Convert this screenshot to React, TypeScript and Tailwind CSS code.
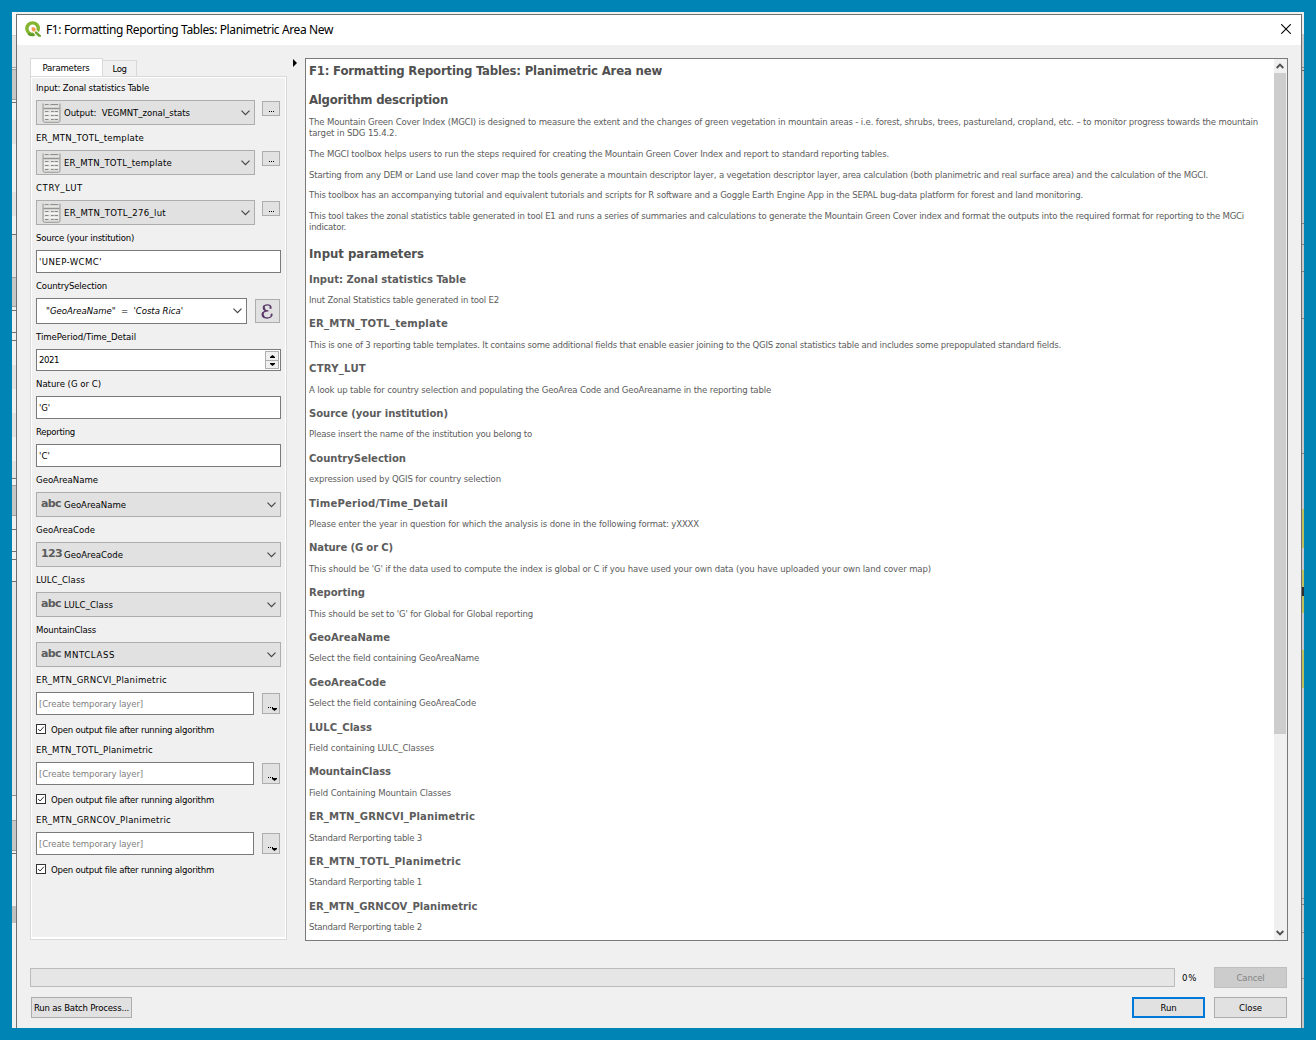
import { useLayoutEffect, useRef, useState } from 'react';
import type { ReactNode } from 'react';

/** Single line of text whose tracking is adjusted so that it spans `w` pixels. */
function Fit({ w, className = '', children }: { w: number; className?: string; children: string }) {
  const ref = useRef<HTMLSpanElement>(null);
  const [spacing, setSpacing] = useState(0);
  useLayoutEffect(() => {
    const el = ref.current;
    if (!el) return;
    const natural = el.getBoundingClientRect().width - spacing * children.length;
    setSpacing((w - natural) / children.length);
  }, [w, children]);
  return (
    <span ref={ref} className={`inline-block whitespace-pre ${className}`} style={{ letterSpacing: spacing }}>
      {children}
    </span>
  );
}

function Chevron({ className = '' }: { className?: string }) {
  return (
    <svg className={`shrink-0 ${className}`} width="9" height="6" viewBox="0 0 9 6" fill="none">
      <path d="M0.5 0.7L4.5 4.7L8.5 0.7" stroke="#444" strokeWidth="1.15" />
    </svg>
  );
}

function TableIcon() {
  return (
    <svg className="shrink-0" width="19" height="20" viewBox="0 0 19 20">
      <path d="M1 1H18V18.5H1Z" fill="#d2d2d0" />
      <path d="M1 0.5V17.6Q1 19.3 2.6 19.3H16.4Q18 19.3 18 17.6V0.5" fill="none" stroke="#9a9a98" strokeWidth="1" />
      <path d="M3 1.5H6.5M8.5 1.5H16" stroke="#8f8f8d" />
      <path d="M2 3.2H17" stroke="#efefed" />
      <path d="M1.5 5.5H17.5" stroke="#949492" />
      <path d="M2 7H17V17.6H2Z" fill="#e6e6e4" />
      <path d="M3 8.5H6.5M9 8.5H11.8M12.6 8.5H16M3 12.5H6.5M9 12.5H11.8M12.6 12.5H16M3 16.5H6.5M9 16.5H11.8M12.6 16.5H16" stroke="#8a8a88" strokeWidth="1.1" />
      <path d="M2 10.5H17M2 14.5H17" stroke="#f6f6f6" />
    </svg>
  );
}

function Field({ label, w, children }: { label: string; w: number; children: ReactNode }) {
  return (
    <div className="mb-[7px]">
      <div className="mb-[6px] flex h-3 items-center">
        <Fit w={w}>{label}</Fit>
      </div>
      {children}
    </div>
  );
}

function LayerField({ label, lw, value, w }: { label: string; lw: number; value: string; w: number }) {
  return (
    <Field label={label} w={lw}>
      <div className="flex">
        <div className="flex h-[25px] w-[219px] items-center border border-[#adadad] bg-[#e1e1e1] pr-[4px] pl-[5px]">
          <TableIcon />
          <Fit w={w} className="ml-[3px]">{value}</Fit>
          <Chevron className="ml-auto" />
        </div>
        <div className="mt-px ml-[7px] flex h-[15px] w-[18px] items-end justify-center gap-px border border-[#adadad] bg-[#e1e1e1] pb-[3px]">
          <Dots />
        </div>
      </div>
    </Field>
  );
}

function Dots() {
  return (
    <>
      <i className="size-px bg-black" />
      <i className="size-px bg-black" />
      <i className="size-px bg-black" />
    </>
  );
}

function TextField({ label, lw, value, w }: { label: string; lw: number; value: string; w: number }) {
  return (
    <Field label={label} w={lw}>
      <div className="flex h-[23px] w-[245px] items-center border border-[#7a7a7a] bg-white pl-[2px]">
        <Fit w={w}>{value}</Fit>
      </div>
    </Field>
  );
}

function ColumnField({ label, lw, kind, value, w }: { label: string; lw: number; kind: string; value: string; w: number }) {
  return (
    <Field label={label} w={lw}>
      <div className="flex h-[25px] w-[245px] items-center border border-[#adadad] bg-[#e1e1e1] pr-[4px] pl-[4px]">
        <span className="flex w-[23px] pb-[2px] text-[11px] font-bold text-[#5c5c5c] font-['DejaVu_Sans']">
          <Fit w={kind === '123' ? 21 : 20}>{kind}</Fit>
        </span>
        <Fit w={w}>{value}</Fit>
        <Chevron className="ml-auto" />
      </div>
    </Field>
  );
}

function OutputField({ label, lw }: { label: string; lw: number }) {
  return (
    <Field label={label} w={lw}>
      <div className="flex">
        <div className="flex h-[23px] w-[218px] items-center border border-[#7a7a7a] bg-white pl-[2px] text-[#808080]">
          <Fit w={104}>[Create temporary layer]</Fit>
        </div>
        <div className="mt-px ml-[8px] flex h-[21px] w-[18px] items-end border border-[#adadad] bg-[#e1e1e1] pb-[2px] pl-[5px]">
          <span className="mb-[3px] flex gap-px"><Dots /></span>
          <svg className="-ml-px" width="5" height="3" viewBox="0 0 5 3"><path d="M0 0H5V1L2.5 3L0 1Z" /></svg>
        </div>
      </div>
      <div className="mt-[7px] flex h-[15px] items-center">
        <svg className="mb-px" width="10" height="10" viewBox="0 0 10 10">
          <rect x="0.5" y="0.5" width="9" height="9" fill="#fff" stroke="#333" />
          <path d="M2.2 5L4.1 7L7.9 2.7" fill="none" stroke="#333" />
        </svg>
        <Fit w={163} className="ml-[5px]">Open output file after running algorithm</Fit>
      </div>
    </Field>
  );
}

function H2({ w, className = '', children }: { w: number; className?: string; children: string }) {
  return (
    <h2 className={`flex h-4 items-center pt-px text-[13px] font-bold text-[#505050] ${className}`}>
      <Fit w={w}>{children}</Fit>
    </h2>
  );
}

function Para({ lines, className = '' }: { lines: [string, number][]; className?: string }) {
  return (
    <div className={className}>
      {lines.map(([t, w]) => (
        <p key={t} className="flex h-[11px] items-center"><Fit w={w}>{t}</Fit></p>
      ))}
    </div>
  );
}

const PARAMS: [string, number, string, number][] = [
  ['Input: Zonal statistics Table', 157, 'Inut Zonal Statistics table generated in tool E2', 190],
  ['ER_MTN_TOTL_template', 139, 'This is one of 3 reporting table templates. It contains some additional fields that enable easier joining to the QGIS zonal statistics table and includes some prepopulated standard fields.', 752],
  ['CTRY_LUT', 57, 'A look up table for country selection and populating the GeoArea Code and GeoAreaname in the reporting table', 462],
  ['Source (your institution)', 139, 'Please insert the name of the institution you belong to', 223],
  ['CountrySelection', 97, 'expression used by QGIS for country selection', 192],
  ['TimePeriod/Time_Detail', 139, 'Please enter the year in question for which the analysis is done in the following format: yXXXX', 390],
  ['Nature (G or C)', 84, "This should be 'G' if the data used to compute the index is global or C if you have used your own data (you have uploaded your own land cover map)", 622],
  ['Reporting', 56, "This should be set to 'G' for Global for Global reporting", 224],
  ['GeoAreaName', 81, 'Select the field containing GeoAreaName', 170],
  ['GeoAreaCode', 77, 'Select the field containing GeoAreaCode', 167],
  ['LULC_Class', 63, 'Field containing LULC_Classes', 125],
  ['MountainClass', 82, 'Field Containing Mountain Classes', 142],
  ['ER_MTN_GRNCVI_Planimetric', 166, 'Standard Rerporting table 3', 113],
  ['ER_MTN_TOTL_Planimetric', 152, 'Standard Rerporting table 1', 113],
  ['ER_MTN_GRNCOV_Planimetric', 168.5, 'Standard Rerporting table 2', 113],
];

/** Slices of the window behind the dialog that show at its left edge. */
function LeftSliver() {
  return (
    <div className="flex w-1 flex-col bg-[#f0f0f0]">
      <i className="h-[23px] bg-[#f7f7f7]" />
      <i className="h-[32px] border-t border-[#d0d0d0] bg-[#e2e2e2]" />
      <i className="h-[3px] border-y border-[#a0a0a0]" />
      <i className="h-[29px] bg-[#c6c6c6]" />
      <i className="h-[4px] border-y border-t-[#a0a0a0] border-b-[#707070]" />
      <i className="h-[17px]" />
      <i className="h-[24px] bg-[#e3e3e3]" />
      <i className="h-[48px]" />
      <i className="h-[24px] bg-[#e3e3e3]" />
      <i className="h-[19px] border-b border-[#707070]" />
      <i className="h-[42px] bg-[#e2e2e2]" />
      <i className="h-[30px] border-y border-[#a0a0a0] bg-[#c6c6c6]" />
      <i className="h-[4px] border-b border-[#707070]" />
      <i className="h-[22px] border-b border-[#707070]" />
      <i className="h-[8px] border-b border-[#707070]" />
      <i className="h-[24px]" />
      <i className="h-[24px] bg-[#e3e3e3]" />
      <i className="h-[24px]" />
      <i className="h-[24px] bg-[#e3e3e3]" />
      <i className="h-[24px]" />
      <i className="h-[18px] border-b border-[#707070] bg-[#e3e3e3]" />
      <i className="h-[6px]" />
      <i className="h-[31px] border-y border-[#a0a0a0] bg-[#c6c6c6]" />
      <i className="h-[14px] border-b border-[#707070]" />
      <i className="h-[22px] border-b border-[#707070]" />
      <i className="h-[8px] border-b border-[#707070]" />
      <i className="h-[22px] border-b border-[#707070]" />
      <i className="h-[214px] border-b border-[#909090] bg-[#e4e4e4]" />
      <i className="h-[24px]" />
      <i className="h-[31px] border-y border-[#a0a0a0] bg-[#c6c6c6]" />
      <i className="h-[3px] border-b border-[#707070]" />
      <i className="h-[52px]" />
      <i className="h-[17px] bg-[#c0c0c0]" />
    </div>
  );
}

/** Slices of the window behind the dialog that show at its right edge. */
function RightSliver() {
  return (
    <div className="flex w-[2px] flex-col bg-[#c9c9c9]">
      <i className="h-[22px] bg-[#eeeeee]" />
      <i className="h-[34px] border-b border-[#808080]" />
      <i className="h-[3px] border-b border-[#606060]" />
      <i className="h-[153px] border-b border-[#808080]" />
      <i className="h-[21px] border-b border-[#808080]" />
      <i className="h-[27px] border-b border-[#808080]" />
      <i className="h-[47px] border-b border-[#808080]" />
      <i className="h-[135px] border-b border-[#808080]" />
      <i className="h-[55px]" />
      <i className="h-[39px] bg-[#bfbf5e]" />
      <i className="h-[22px]" />
      <i className="h-[17px] bg-[#bfbf5e]" />
      <i className="h-[9px] bg-[#303030]" />
      <i className="h-[17px] bg-[#bfbf5e]" />
      <i className="h-[37px]" />
      <i className="h-[38px] bg-[#bfbf5e]" />
      <i className="h-[211px] border-b border-[#909090]" />
      <i className="h-[6px] border-b border-[#808080]" />
      <i className="h-[28px] border-b border-[#909090]" />
      <i className="h-[46px] border-b border-[#909090]" />
    </div>
  );
}

function Parameters() {
  return (
    <section className="flex w-[257px] flex-col pt-[13px]">
      <div className="flex h-[18px] items-end">
        <div className="flex h-[18px] w-[73px] items-center justify-center border border-b-0 border-[#d9d9d9] bg-white pr-px">
          <Fit w={47}>Parameters</Fit>
        </div>
        <div className="flex h-[16px] w-[34px] items-center justify-center border border-b-0 border-l-0 border-[#d9d9d9] bg-[#f0f0f0] pt-px">
          <Fit w={14}>Log</Fit>
        </div>
      </div>
      <div className="h-[864px] border border-[#d9d9d9]">
        <div className="h-full border border-b-2 border-white pt-[4px] pl-[4px]">
          <LayerField label="Input: Zonal statistics Table" lw={113} value="Output:  VEGMNT_zonal_stats" w={126} />
          <LayerField label="ER_MTN_TOTL_template" lw={108} value="ER_MTN_TOTL_template" w={108} />
          <LayerField label="CTRY_LUT" lw={47} value="ER_MTN_TOTL_276_lut" w={102} />
          <TextField label="Source (your institution)" lw={98} value="'UNEP-WCMC'" w={63} />
          <Field label="CountrySelection" w={71}>
            <div className="flex items-center">
              <div className="flex h-[26px] w-[211px] items-center border border-[#7a7a7a] bg-white pr-[4px] pl-[9px]">
                <Fit w={137} className="italic">{'"GeoAreaName"  =  \'Costa Rica\''}</Fit>
                <Chevron className="ml-auto" />
              </div>
              <div className="ml-[8px] flex h-[24px] w-[25px] items-center justify-center border border-[#adadad] bg-[#e1e1e1]">
                <svg className="mr-[2px]" width="12" height="15" viewBox="0 0 12 15" fill="none" stroke="#5b3a6b" strokeLinecap="round">
                  <path d="M9.8 4.2C10.3 1.7 8.4 0.9 6.4 0.9C3.8 0.9 2.3 2.2 2.4 3.9C2.5 5.8 4.2 6.8 7.4 6.9C3.8 6.9 1.2 8.3 1.2 10.6C1.2 12.8 3.2 14 6 14C9 14 11 12.6 10.9 10.2" strokeWidth="1.3" />
                  <path d="M2.9 2.5C2.5 3.5 2.8 4.8 3.7 5.7M1.9 9C1.5 10.3 1.7 11.6 2.7 12.7" strokeWidth="2" />
                  <path d="M9.4 3.2V3.9M10.4 10.7V11.1" strokeWidth="1.8" />
                </svg>
              </div>
            </div>
          </Field>
          <Field label="TimePeriod/Time_Detail" w={100}>
            <div className="flex h-[22px] w-[245px] items-center justify-between border border-[#7a7a7a] bg-white pr-px pl-[2px]">
              <Fit w={20}>2021</Fit>
              <div className="flex w-[14px] flex-col border border-[#adadad] bg-[#adadad]">
                <span className="flex h-[8px] items-center justify-center bg-[#f0f0f0]">
                  <svg width="5" height="3" viewBox="0 0 5 3"><path d="M0 3V2L2.5 0L5 2V3Z" /></svg>
                </span>
                <span className="mt-px flex h-[7px] items-center justify-center bg-[#f0f0f0]">
                  <svg width="5" height="3" viewBox="0 0 5 3"><path d="M0 0H5V1L2.5 3L0 1Z" /></svg>
                </span>
              </div>
            </div>
          </Field>
          <TextField label="Nature (G or C)" lw={65} value="'G'" w={11} />
          <TextField label="Reporting" lw={39} value="'C'" w={11} />
          <ColumnField label="GeoAreaName" lw={62} kind="abc" value="GeoAreaName" w={62} />
          <ColumnField label="GeoAreaCode" lw={59} kind="123" value="GeoAreaCode" w={59} />
          <ColumnField label="LULC_Class" lw={49} kind="abc" value="LULC_Class" w={49} />
          <ColumnField label="MountainClass" lw={60} kind="abc" value="MNTCLASS" w={51} />
          <OutputField label="ER_MTN_GRNCVI_Planimetric" lw={131} />
          <OutputField label="ER_MTN_TOTL_Planimetric" lw={117} />
          <OutputField label="ER_MTN_GRNCOV_Planimetric" lw={135} />
        </div>
      </div>
    </section>
  );
}

function HelpPane() {
  return (
    <section className="mt-[13px] flex h-[883px] w-[983px] border border-[#7a7a7a] bg-white text-[#5c5c5c]">
      <div className="flex-1 overflow-hidden pt-[3px] pl-[3px]">
        <H2 w={353}>F1: Formatting Reporting Tables: Planimetric Area new</H2>
        <H2 w={139} className="mt-[13px]">Algorithm description</H2>
        <Para className="mt-[9px]" lines={[
          ['The Mountain Green Cover Index (MGCI) is designed to measure the extent and the changes of green vegetation in mountain areas - i.e. forest, shrubs, trees, pastureland, cropland, etc. – to monitor progress towards the mountain', 949],
          ['target in SDG 15.4.2.', 88],
        ]} />
        <Para className="mt-[10px]" lines={[['The MGCI toolbox helps users to run the steps required for creating the Mountain Green Cover Index and report to standard reporting tables.', 580]]} />
        <Para className="mt-[10px]" lines={[['Starting from any DEM or Land use land cover map the tools generate a mountain descriptor layer, a vegetation descriptor layer, area calculation (both planimetric and real surface area) and the calculation of the MGCI.', 899]]} />
        <Para className="mt-[9px]" lines={[['This toolbox has an accompanying tutorial and equivalent tutorials and scripts for R software and a Goggle Earth Engine App in the SEPAL bug-data platform for forest and land monitoring.', 774]]} />
        <Para className="mt-[10px]" lines={[
          ['This tool takes the zonal statistics table generated in tool E1 and runs a series of summaries and calculations to generate the Mountain Green Cover index and format the outputs into the required format for reporting to the MGCi', 935],
          ['indicator.', 37],
        ]} />
        <H2 w={115} className="mt-[13px]">Input parameters</H2>
        <div className="mt-[11.3px]">
          {PARAMS.map(([t, tw, d, dw]) => (
            <div key={t} className="h-[44.8px]">
              <h3 className="mb-[8px] flex h-[14px] items-center text-[11.2px] font-bold"><Fit w={tw}>{t}</Fit></h3>
              <p className="flex h-[11px] items-center"><Fit w={dw}>{d}</Fit></p>
            </div>
          ))}
        </div>
      </div>
      <div className="flex w-[13px] flex-col bg-[#f0f0f0] pr-px">
        <div className="flex h-[14px] items-center justify-center">
          <svg width="8" height="6" viewBox="0 0 8 6" fill="none"><path d="M0.7 5L4 1.7L7.3 5" stroke="#505050" strokeWidth="1.9" /></svg>
        </div>
        <div className="h-[661px] bg-[#cdcdcd]" />
        <div className="mt-auto flex h-[15px] items-center justify-center">
          <svg width="8" height="6" viewBox="0 0 8 6" fill="none"><path d="M0.7 1L4 4.3L7.3 1" stroke="#505050" strokeWidth="1.9" /></svg>
        </div>
      </div>
    </section>
  );
}

export default function App() {
  return (
    <div className="flex h-[1040px] w-[1316px] bg-[#0083b5] p-3 text-[9.5px] leading-none text-black font-['DejaVu_Sans_Condensed','DejaVu_Sans',sans-serif]">
      <LeftSliver />
      <div className="flex w-[1286px] flex-col bg-[#f0f0f0] pt-[2px]">
        <main className="flex flex-1 flex-col border border-b-0 border-[#707070] bg-[#f0f0f0]">
          <header className="flex h-[30px] items-center bg-white pr-[10px] pl-[8px]">
            <svg className="mb-[2px]" width="16" height="16" viewBox="0 0 16 16">
              <circle cx="7.6" cy="7.6" r="5.7" fill="none" stroke="#84b52f" strokeWidth="3.4" />
              <path d="M3.4 12.4A6.2 6.2 0 0 0 9 13.7" fill="none" stroke="#5f9a2e" strokeWidth="2.6" />
              <path d="M8 8.4L10.6 8L16 13.2V15.8H12L7.4 10.8Z" fill="#fff" />
              <path d="M9.8 10.4H11.6L16 14.6V15.8H13.6L9.8 12Z" fill="#6ba32c" />
              <path d="M6.6 6.2H9L10.6 7.8V9.6L9.4 10.4H8L6.6 9Z" fill="#f29a4a" />
            </svg>
            <span className="ml-[5px] text-[12px] font-['Noto_Sans','Open_Sans',sans-serif]">
              <Fit w={287}>F1: Formatting Reporting Tables: Planimetric Area New</Fit>
            </span>
            <svg className="mb-[2px] ml-auto" width="10" height="10" viewBox="0 0 10 10"><path d="M0.2 0.2L9.8 9.8M9.8 0.2L0.2 9.8" stroke="#000" strokeWidth="1.1" /></svg>
          </header>
          <div className="flex h-[896px] pl-[13px]">
            <Parameters />
            <div className="flex w-[18px] pt-[14px] pl-[6px]">
              <svg width="4" height="8" viewBox="0 0 4 8"><path d="M0 0L4 4L0 8Z" /></svg>
            </div>
            <HelpPane />
          </div>
          <footer className="pr-[14px] pl-[13px]">
            <div className="mt-[26px] flex h-[21px] items-center">
              <div className="h-[19px] w-[1145px] border border-[#bcbcbc] bg-[#e6e6e6]" />
              <Fit w={15} className="ml-[7px]">0%</Fit>
              <div className="ml-auto flex h-[21px] w-[73px] items-center justify-center border border-[#bfbfbf] bg-[#cccccc] text-[#838383]">
                <Fit w={28}>Cancel</Fit>
              </div>
            </div>
            <div className="mt-[9px] flex h-[21px]">
              <div className="ml-px flex w-[101px] items-center justify-center border border-[#adadad] bg-[#e1e1e1]">
                <Fit w={95}>Run as Batch Process...</Fit>
              </div>
              <div className="ml-auto flex w-[73px] items-center justify-center border-2 border-[#0078d7] bg-[#e1e1e1]">
                <Fit w={16}>Run</Fit>
              </div>
              <div className="ml-[9px] flex w-[73px] items-center justify-center border border-[#adadad] bg-[#e1e1e1]">
                <Fit w={23}>Close</Fit>
              </div>
            </div>
          </footer>
        </main>
      </div>
      <RightSliver />
    </div>
  );
}
